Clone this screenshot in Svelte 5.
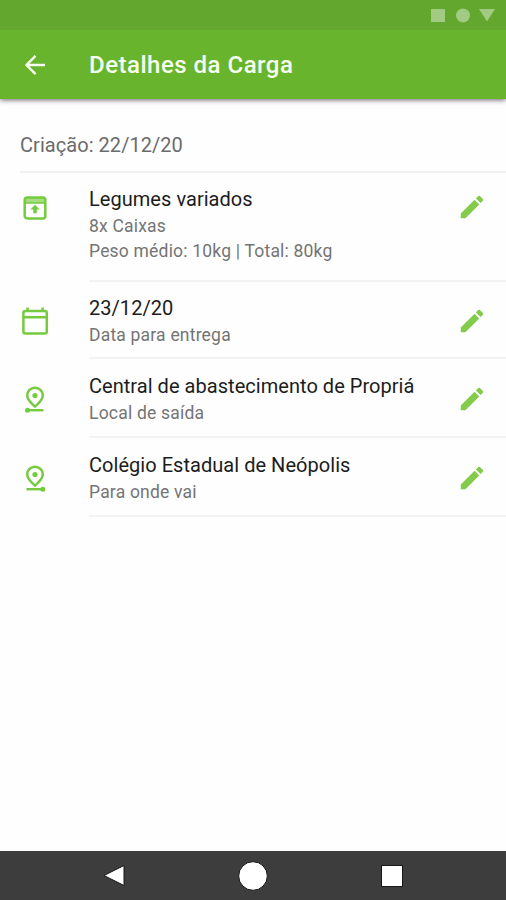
<script>
  const items = [
    {
      icon: "box",
      title: "Legumes variados",
      lines: ["8x Caixas", "Peso médio: 10kg | Total: 80kg"]
    },
    { icon: "calendar", title: "23/12/20", lines: ["Data para entrega"] },
    {
      icon: "origin",
      title: "Central de abastecimento de Propriá",
      lines: ["Local de saída"]
    },
    {
      icon: "destination",
      title: "Colégio Estadual de Neópolis",
      lines: ["Para onde vai"]
    }
  ];
</script>

<style>
  :global(body) {
    background: #fff;
  }
  .screen {
    display: flex;
    flex-direction: column;
    height: 900px;
    overflow: hidden;
    font-family: Roboto, sans-serif;
    background: #fefefe;
  }
  svg {
    display: block;
  }
  button {
    padding: 0;
    border: none;
    background: none;
    cursor: pointer;
  }
  .status {
    display: flex;
    justify-content: flex-end;
    height: 30px;
    background: #63a72e;
  }
  .appbar {
    display: flex;
    align-items: center;
    height: 69px;
    color: #f6ffef;
    background: #68b42c;
    box-shadow: 0 1px 5px rgba(50, 30, 50, 0.7);
    clip-path: inset(0 0 -10px 0);
  }
  .back {
    width: 28px;
    margin: 0 40px 0 21px;
    color: inherit;
  }
  h1 {
    margin: 0;
    font-size: 24px;
    font-weight: 500;
    letter-spacing: 0.5px;
    line-height: 30px;
  }
  main {
    flex: 1;
  }
  .created {
    height: 74px;
    margin: 0 0 0 20px;
    box-sizing: border-box;
    padding-top: 33px;
    border-bottom: 2px solid #f0f0f0;
    color: #6b6b6b;
    font-size: 20px;
    line-height: 26px;
    letter-spacing: 0.05px;
  }
  ul {
    margin: 0;
    padding: 0;
    list-style: none;
  }
  .item {
    display: flex;
    height: 79px;
  }
  .item__icon {
    width: 28px;
    margin: 27px 40px 0 21px;
    color: #74cb3e;
  }
  .item__body {
    flex: 1;
    display: flex;
    box-sizing: border-box;
    padding-top: 13px;
    border-bottom: 2px solid #f3f3f3;
  }
  .item__text {
    flex: 1;
    white-space: nowrap;
  }
  h2 {
    margin: 0 0 1px;
    color: #1c1c1c;
    font-size: 20px;
    font-weight: 400;
    line-height: 28px;
    letter-spacing: 0.04px;
  }
  p {
    margin: 0;
    color: #747474;
    font-size: 17.5px;
    line-height: 25px;
    letter-spacing: 0.2px;
  }
  .edit {
    align-self: flex-start;
    margin: 12px 19px 0 0;
    color: #83cb4b;
  }
  .item--box {
    height: 109px;
  }
  .item--calendar {
    height: 77px;
  }
  .item--box .item__body,
  .item--calendar .item__body {
    padding-top: 12px;
  }
  .item--box .item__icon {
    margin-top: 21px;
  }
  .item--box .edit {
    margin-top: 7px;
  }
  .item--calendar .item__icon {
    margin-top: 25px;
  }
  .navbar {
    height: 49px;
    background: #3d3d3d;
  }
</style>

<div class="screen">
  <div class="status">
    <svg width="80" height="30" viewBox="0 0 80 30" fill="#a1ca82">
      <rect x="5" y="9" width="14" height="13" />
      <circle cx="37" cy="15.5" r="7" />
      <path d="M53 9h16l-8 12.500z" />
    </svg>
  </div>
  <header class="appbar">
    <button class="back" aria-label="Voltar">
      <svg width="28" height="28" viewBox="0 0 28 28" fill="none" stroke="currentColor" stroke-width="2.400">
        <path d="M24 14H6M14.500 4.800 5.500 14l9 9.200" />
      </svg>
    </button>
    <h1>Detalhes da Carga</h1>
  </header>
  <main>
    <div class="created">Criação: 22/12/20</div>
    <ul>
      {#each items as item}
        <li class="item item--{item.icon}">
          <div class="item__icon">
            <svg width="28" height="28" viewBox="0 0 28 28" fill="none" stroke="currentColor" stroke-width="2.500">
              {#if item.icon === "box"}
                <rect x="3.700" y="3.600" width="20.600" height="20.800" rx="2.500" />
                <path d="M4 4h20v5H4z" fill="currentColor" fill-opacity="0.650" stroke="none" />
                <path d="M4 9h20" stroke-width="1.500" />
                <path d="M14 10.800l4.600 4.800h-2.800v3.600h-3.600v-3.600H9.400z" fill="currentColor" stroke="none" />
              {:else if item.icon === "calendar"}
                <rect x="2.400" y="4" width="23.400" height="22.500" rx="2" />
                <path d="M2.400 10.300h23.400M6.600.500v3M21.600.500v3" />
              {:else}
                <path d="M14 20.600C9.500 16.700 6.200 13.500 6.200 9.500a7.800 7.800 0 0 1 15.600 0c0 4-3.300 7.200-7.800 11.100z" />
                <circle cx="14" cy="9.500" r="2.600" fill="currentColor" stroke="none" />
                <path d="M5.500 24.200h17" stroke-width="2.400" />
                <circle cx={item.icon === "origin" ? 6.5 : 21.8} cy="24.200" r="2.500" fill="currentColor" stroke="none" />
              {/if}
            </svg>
          </div>
          <div class="item__body">
            <div class="item__text">
              <h2>{item.title}</h2>
              {#each item.lines as line}
                <p>{line}</p>
              {/each}
            </div>
            <button class="edit" aria-label="Editar">
              <svg width="30" height="30" viewBox="0 0 24 24" fill="currentColor">
                <path d="M3 17.250V21h3.750L17.810 9.940l-3.750-3.750L3 17.250zM20.710 7.040a1 1 0 0 0 0-1.410l-2.340-2.340a1 1 0 0 0-1.410 0l-1.830 1.830 3.750 3.750 1.830-1.830z" />
              </svg>
            </button>
          </div>
        </li>
      {/each}
    </ul>
  </main>
  <nav class="navbar">
    <svg width="506" height="49" viewBox="0 0 506 49" fill="#fff" stroke="#171717" stroke-width="1">
      <path d="M104 24.500 124 14.500v20z" />
      <circle cx="253" cy="25" r="14.300" />
      <rect x="381.500" y="14.500" width="21" height="21" />
    </svg>
  </nav>
</div>
